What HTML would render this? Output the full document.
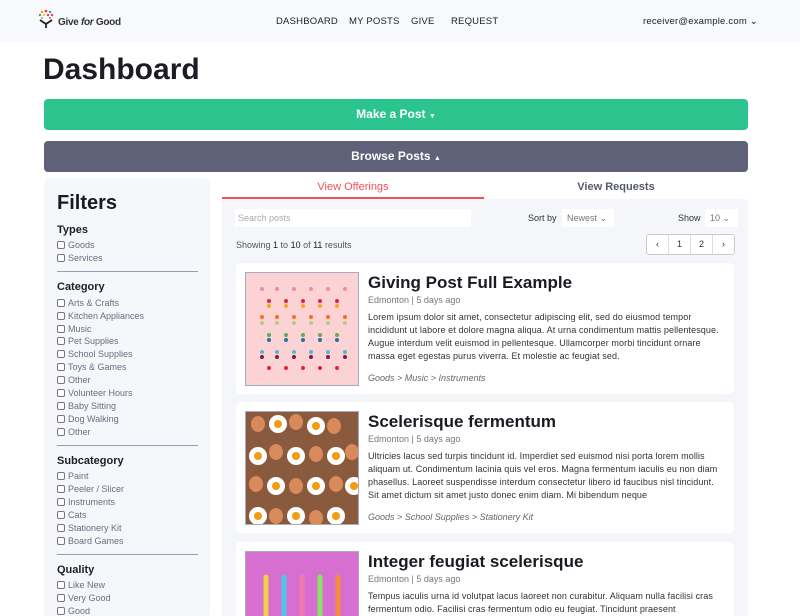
<!DOCTYPE html>
<html><head><meta charset="utf-8"><style>
*{box-sizing:border-box;margin:0;padding:0}
html,body{width:800px;height:616px;overflow:hidden}
body{background:#fff;font-family:"Liberation Sans",sans-serif;color:#222;position:relative}
.abs{position:absolute}
.hdr{left:0;top:0;width:800px;height:42px;background:#f8f9fc}
.nav{top:16px;font-size:9.5px;color:#222;letter-spacing:.2px}
.sb{left:44px;top:178px;width:166px;height:440px;background:#f6f7fb;border-radius:6px}
.sb h3{position:absolute;left:13px;font-size:11px;font-weight:bold;color:#1e1e2a}
.cb{position:absolute;left:13px;font-size:9px;color:#6c6c82;display:flex;align-items:center}
.cb i{display:inline-block;width:8px;height:8px;border:1px solid #777;border-radius:2px;margin-right:3px;background:#fff}
.hr{position:absolute;left:13px;width:141px;height:1px;background:#9a9ab0}
.card{left:236px;width:498px;background:#fff;border-radius:5px;overflow:hidden}
.card h2{position:absolute;left:132px;top:10px;font-size:17px;font-weight:bold;color:#1a1a22}
.card .loc{position:absolute;left:132px;top:32px;font-size:9px;color:#777}
.card .tx{position:absolute;left:132px;top:48px;width:358px;font-size:9px;line-height:13px;color:#333;letter-spacing:.1px}
.card .cat{position:absolute;left:132px;top:110px;font-size:9px;color:#666;font-style:italic}
.img{position:absolute;left:9px;top:9px;width:114px;height:114px;border:1px solid #a9a9c0;overflow:hidden}
</style></head><body>
<div class="abs hdr"></div>
<svg class="abs" style="left:36px;top:8px" width="20" height="20" viewBox="0 0 20 20">
<circle cx="10" cy="3" r="1.3" fill="#e33"/><circle cx="6" cy="4" r="1.2" fill="#f90"/><circle cx="14" cy="4" r="1.2" fill="#3a3"/><circle cx="4" cy="7" r="1.2" fill="#39c"/><circle cx="16" cy="7" r="1.2" fill="#c3c"/><circle cx="8" cy="7" r="1.2" fill="#fc3"/><circle cx="12" cy="7" r="1.2" fill="#e36"/><circle cx="6" cy="10" r="1" fill="#6c3"/><circle cx="14" cy="10" r="1" fill="#f63"/>
<path d="M4 12 L10 16 L16 12 M10 16 V20" stroke="#222" stroke-width="1.8" fill="none"/></svg>
<div class="abs" style="left:58px;top:17px;font-size:10px;font-weight:bold;color:#333;letter-spacing:-.3px">Give <i>for</i> Good</div>
<div class="abs nav" style="left:276px">DASHBOARD</div>
<div class="abs nav" style="left:349px">MY POSTS</div>
<div class="abs nav" style="left:411px">GIVE</div>
<div class="abs nav" style="left:451px">REQUEST</div>
<div class="abs nav" style="left:643px">receiver@example.com ⌄</div>
<div class="abs" style="left:43px;top:53px;font-size:30px;font-weight:bold;color:#1c1c24">Dashboard</div>
<div class="abs" style="left:44px;top:99px;width:704px;height:31px;background:#2bc48f;border-radius:4px;color:#fff;font-size:12px;font-weight:bold;text-align:center;line-height:31px">Make a Post <span style="font-size:7px">▼</span></div>
<div class="abs" style="left:44px;top:141px;width:704px;height:31px;background:#5f6179;border-radius:4px;color:#fff;font-size:12px;font-weight:bold;text-align:center;line-height:31px">Browse Posts <span style="font-size:7px">▲</span></div>
<div class="abs sb">
<div style="position:absolute;left:13px;top:14px;font-size:20px;font-weight:bold;color:#1a1a22">Filters</div>
<h3 style="top:46px">Types</h3>
<div class="cb" style="top:62px"><i></i>Goods</div><div class="cb" style="top:75px"><i></i>Services</div>
<div class="hr" style="top:93px"></div>
<h3 style="top:103px">Category</h3>
<div class="cb" style="top:120px"><i></i>Arts &amp; Crafts</div>
<div class="cb" style="top:133px"><i></i>Kitchen Appliances</div>
<div class="cb" style="top:146px"><i></i>Music</div>
<div class="cb" style="top:158px"><i></i>Pet Supplies</div>
<div class="cb" style="top:171px"><i></i>School Supplies</div>
<div class="cb" style="top:184px"><i></i>Toys &amp; Games</div>
<div class="cb" style="top:197px"><i></i>Other</div>
<div class="cb" style="top:210px"><i></i>Volunteer Hours</div>
<div class="cb" style="top:223px"><i></i>Baby Sitting</div>
<div class="cb" style="top:236px"><i></i>Dog Walking</div>
<div class="cb" style="top:249px"><i></i>Other</div>
<div class="hr" style="top:267px"></div>
<h3 style="top:277px">Subcategory</h3>
<div class="cb" style="top:293px"><i></i>Paint</div>
<div class="cb" style="top:306px"><i></i>Peeler / Slicer</div>
<div class="cb" style="top:319px"><i></i>Instruments</div>
<div class="cb" style="top:332px"><i></i>Cats</div>
<div class="cb" style="top:345px"><i></i>Stationery Kit</div>
<div class="cb" style="top:358px"><i></i>Board Games</div>
<div class="hr" style="top:376px"></div>
<h3 style="top:386px">Quality</h3>
<div class="cb" style="top:402px"><i></i>Like New</div>
<div class="cb" style="top:415px"><i></i>Very Good</div>
<div class="cb" style="top:428px"><i></i>Good</div>
</div>
<div class="abs" style="left:222px;top:199px;width:526px;height:420px;background:#f5f6fa;border-radius:4px"></div>
<div class="abs" style="left:222px;top:181px;width:262px;text-align:center;font-size:11px;color:#f0505a">View Offerings</div>
<div class="abs" style="left:222px;top:197px;width:262px;height:2px;background:#f0505a"></div>
<div class="abs" style="left:484px;top:181px;width:264px;text-align:center;font-size:11px;font-weight:bold;color:#555a6e">View Requests</div>
<div class="abs" style="left:235px;top:209px;width:236px;height:18px;background:#fff;font-size:9px;color:#aaa;padding:4px 3px">Search posts</div>
<div class="abs" style="left:528px;top:213px;font-size:9px;color:#333">Sort by</div>
<div class="abs" style="left:562px;top:209px;width:52px;height:18px;background:#fff;font-size:9px;color:#777;padding:4px 5px">Newest ⌄</div>
<div class="abs" style="left:678px;top:213px;font-size:9px;color:#333">Show</div>
<div class="abs" style="left:705px;top:209px;width:33px;height:18px;background:#fff;font-size:9px;color:#777;padding:4px 5px">10 ⌄</div>
<div class="abs" style="left:236px;top:240px;font-size:9px;color:#555">Showing <b style="color:#222;font-weight:normal">1</b> to <b style="color:#222;font-weight:normal">10</b> of <b style="color:#222;font-weight:normal">11</b> results</div>
<div class="abs" style="left:646px;top:234px;width:89px;height:21px;background:#fff;border:1px solid #ccc;border-radius:3px;display:flex;font-size:9px;color:#333">
<div style="flex:1;text-align:center;line-height:19px;border-right:1px solid #ddd">‹</div><div style="flex:1;text-align:center;line-height:19px;border-right:1px solid #ddd">1</div><div style="flex:1;text-align:center;line-height:19px;border-right:1px solid #ddd">2</div><div style="flex:1;text-align:center;line-height:19px">›</div></div>

<div class="abs card" style="top:263px;height:131px">
<div class="img" style="background:#fcd3d5"><svg width="114" height="114">
<g fill="#f08aa5"><circle cx="16" cy="16" r="2"/><circle cx="31" cy="16" r="2"/><circle cx="48" cy="16" r="2"/><circle cx="65" cy="16" r="2"/><circle cx="82" cy="16" r="2"/><circle cx="99" cy="16" r="2"/></g>
<g fill="#e8203a"><circle cx="23" cy="28" r="2"/><circle cx="40" cy="28" r="2"/><circle cx="57" cy="28" r="2"/><circle cx="74" cy="28" r="2"/><circle cx="91" cy="28" r="2"/><circle cx="23" cy="95" r="2"/><circle cx="40" cy="95" r="2"/><circle cx="57" cy="95" r="2"/><circle cx="74" cy="95" r="2"/><circle cx="91" cy="95" r="2"/></g>
<g fill="#f5a623"><circle cx="23" cy="33" r="2"/><circle cx="40" cy="33" r="2"/><circle cx="57" cy="33" r="2"/><circle cx="74" cy="33" r="2"/><circle cx="91" cy="33" r="2"/></g>
<g fill="#f37021"><circle cx="16" cy="44" r="2"/><circle cx="31" cy="44" r="2"/><circle cx="48" cy="44" r="2"/><circle cx="65" cy="44" r="2"/><circle cx="82" cy="44" r="2"/><circle cx="99" cy="44" r="2"/></g>
<g fill="#b8c98a"><circle cx="16" cy="50" r="2"/><circle cx="31" cy="50" r="2"/><circle cx="48" cy="50" r="2"/><circle cx="65" cy="50" r="2"/><circle cx="82" cy="50" r="2"/><circle cx="99" cy="50" r="2"/></g>
<g fill="#6aa84f"><circle cx="23" cy="62" r="2"/><circle cx="40" cy="62" r="2"/><circle cx="57" cy="62" r="2"/><circle cx="74" cy="62" r="2"/><circle cx="91" cy="62" r="2"/></g>
<g fill="#2a6fa8"><circle cx="23" cy="67" r="2"/><circle cx="40" cy="67" r="2"/><circle cx="57" cy="67" r="2"/><circle cx="74" cy="67" r="2"/><circle cx="91" cy="67" r="2"/></g>
<g fill="#4fb8dd"><circle cx="16" cy="79" r="2"/><circle cx="31" cy="79" r="2"/><circle cx="48" cy="79" r="2"/><circle cx="65" cy="79" r="2"/><circle cx="82" cy="79" r="2"/><circle cx="99" cy="79" r="2"/></g>
<g fill="#8a1a3a"><circle cx="16" cy="84" r="2"/><circle cx="31" cy="84" r="2"/><circle cx="48" cy="84" r="2"/><circle cx="65" cy="84" r="2"/><circle cx="82" cy="84" r="2"/><circle cx="99" cy="84" r="2"/></g>
</svg></div>
<h2>Giving Post Full Example</h2>
<div class="loc">Edmonton | 5 days ago</div>
<div class="tx">Lorem ipsum dolor sit amet, consectetur adipiscing elit, sed do eiusmod tempor incididunt ut labore et dolore magna aliqua. At urna condimentum mattis pellentesque. Augue interdum velit euismod in pellentesque. Ullamcorper morbi tincidunt ornare massa eget egestas purus viverra. Et molestie ac feugiat sed.</div>
<div class="cat">Goods &gt; Music &gt; Instruments</div>
</div>

<div class="abs card" style="top:402px;height:131px">
<div class="img" style="background:#8a5a3e"><svg width="114" height="114">
<g fill="#d98a5a"><ellipse cx="12" cy="12" rx="7" ry="8"/><ellipse cx="50" cy="10" rx="7" ry="8"/><ellipse cx="88" cy="14" rx="7" ry="8"/><ellipse cx="30" cy="40" rx="7" ry="8"/><ellipse cx="70" cy="42" rx="7" ry="8"/><ellipse cx="106" cy="40" rx="7" ry="8"/><ellipse cx="10" cy="72" rx="7" ry="8"/><ellipse cx="50" cy="74" rx="7" ry="8"/><ellipse cx="90" cy="72" rx="7" ry="8"/><ellipse cx="30" cy="104" rx="7" ry="8"/><ellipse cx="70" cy="106" rx="7" ry="8"/></g>
<g fill="#fff"><circle cx="32" cy="12" r="9"/><circle cx="70" cy="14" r="9"/><circle cx="12" cy="44" r="9"/><circle cx="50" cy="44" r="9"/><circle cx="90" cy="44" r="9"/><circle cx="30" cy="74" r="9"/><circle cx="70" cy="74" r="9"/><circle cx="108" cy="74" r="9"/><circle cx="12" cy="104" r="9"/><circle cx="50" cy="104" r="9"/><circle cx="90" cy="104" r="9"/></g>
<g fill="#f39c12"><circle cx="32" cy="12" r="4"/><circle cx="70" cy="14" r="4"/><circle cx="12" cy="44" r="4"/><circle cx="50" cy="44" r="4"/><circle cx="90" cy="44" r="4"/><circle cx="30" cy="74" r="4"/><circle cx="70" cy="74" r="4"/><circle cx="108" cy="74" r="4"/><circle cx="12" cy="104" r="4"/><circle cx="50" cy="104" r="4"/><circle cx="90" cy="104" r="4"/></g>
</svg></div>
<h2>Scelerisque fermentum</h2>
<div class="loc">Edmonton | 5 days ago</div>
<div class="tx">Ultricies lacus sed turpis tincidunt id. Imperdiet sed euismod nisi porta lorem mollis aliquam ut. Condimentum lacinia quis vel eros. Magna fermentum iaculis eu non diam phasellus. Laoreet suspendisse interdum consectetur libero id faucibus nisl tincidunt. Sit amet dictum sit amet justo donec enim diam. Mi bibendum neque</div>
<div class="cat">Goods &gt; School Supplies &gt; Stationery Kit</div>
</div>

<div class="abs card" style="top:542px;height:74px;border-radius:5px 5px 0 0">
<div class="img" style="background:#d66fd0;height:80px;border-bottom:none"><svg width="114" height="80">
<g stroke-width="5" stroke-linecap="round"><line x1="20" y1="25" x2="20" y2="80" stroke="#f2d04a"/><line x1="38" y1="25" x2="38" y2="80" stroke="#4fc3e8"/><line x1="56" y1="25" x2="56" y2="80" stroke="#f07ab0"/><line x1="74" y1="25" x2="74" y2="80" stroke="#8be06a"/><line x1="92" y1="25" x2="92" y2="80" stroke="#f28b3a"/></g>
</svg></div>
<h2>Integer feugiat scelerisque</h2>
<div class="loc">Edmonton | 5 days ago</div>
<div class="tx">Tempus iaculis urna id volutpat lacus laoreet non curabitur. Aliquam nulla facilisi cras fermentum odio. Facilisi cras fermentum odio eu feugiat. Tincidunt praesent</div>
</div>
</body></html>
